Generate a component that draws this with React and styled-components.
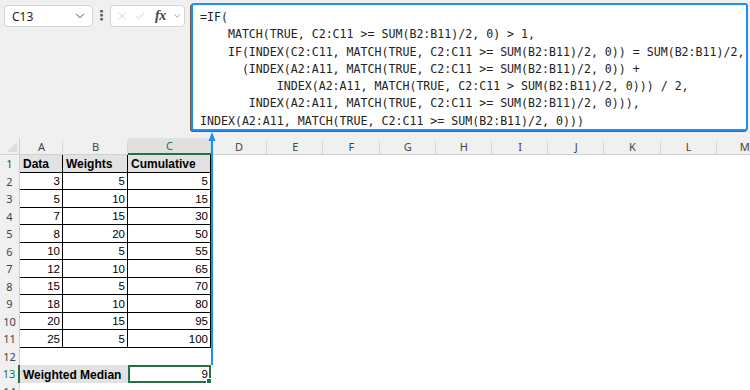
import React from "react";
import styled, { createGlobalStyle } from "styled-components";
import { ChevronDown, X, Check } from "lucide-react";

const Global = createGlobalStyle`
  html, body { margin: 0; padding: 0; background: #fff; }
  body { width: 750px; height: 390px; overflow: hidden; font-family: "Liberation Sans", Arial, sans-serif; }
`;

const Page = styled.div`
  position: relative;
  width: 750px;
  height: 390px;
  overflow: hidden;
  background: #fff;
`;

const TopBar = styled.div`
  display: flex;
  align-items: flex-start;
  height: 138px;
  box-sizing: border-box;
  padding: 3px 2px 0 4px;
  background: #f0f0f0;
`;

const NameBox = styled.div`
  margin-top: 2px;
  width: 89px;
  height: 22px;
  box-sizing: border-box;
  display: flex;
  align-items: center;
  justify-content: space-between;
  padding: 0 5px 0 7px;
  background: #fff;
  border: 1px solid #d4d4d4;
  border-radius: 4px;
  font-family: "Noto Sans", "Open Sans", sans-serif;
  font-size: 12px;
  color: #1f1f1f;
`;

const Dots = styled.div`
  width: 17px;
  margin-top: 4px;
  text-align: center;
  font-family: "DejaVu Sans", sans-serif;
  font-size: 14px;
  font-weight: bold;
  color: #555;
`;

const FxBox = styled.div`
  margin-top: 2px;
  width: 75px;
  height: 22px;
  box-sizing: border-box;
  display: flex;
  align-items: center;
  gap: 6px;
  padding: 0 2px 0 5px;
  background: #fff;
  border: 1px solid #d4d4d4;
  border-radius: 4px;
  color: #bdbdbd;
`;

const Fx = styled.span`
  margin-left: 3px;
  font-family: "Liberation Serif", "DejaVu Serif", serif;
  font-style: italic;
  font-weight: bold;
  font-size: 14px;
  color: #444;
  letter-spacing: -0.5px;
`;

const FormulaBox = styled.div`
  margin-left: 6px;
  width: 557px;
  height: 128px;
  box-sizing: border-box;
  padding: 4px 0 0 7px;
  background: #fff;
  border: 2px solid #1e8ff6;
  border-radius: 3px;
  box-shadow: -1px 1px 0 #6b5a4a;
  font-family: "DejaVu Sans Mono", "Liberation Mono", monospace;
  font-size: 11.6px;
  line-height: 17.3px;
  color: #222;
  white-space: pre;
  overflow: hidden;
`;

const Sheet = styled.div`
  display: grid;
  grid-template-columns: 20px 43px 65px 83px repeat(10, 56.2px);
  grid-template-rows: 17px repeat(14, 17.5px);
`;

const Corner = styled.div`
  position: relative;
  background: #f0f0f0;
  border-bottom: 1px solid #d0d0d0;
  border-right: 1px solid #d0d0d0;
  &::after {
    content: "";
    position: absolute;
    right: 2px;
    bottom: 2px;
    border-left: 10px solid transparent;
    border-bottom: 10px solid #dcdcdc;
  }
`;

const ColHead = styled.div`
  position: relative;
  display: flex;
  align-items: center;
  justify-content: center;
  box-sizing: border-box;
  background: ${(p) => (p.$active ? "#e0e0e0" : "#f0f0f0")};
  border-bottom: ${(p) => (p.$active ? "2px solid #217346" : "1px solid #d0d0d0")};
  font-family: "Noto Sans", "Open Sans", sans-serif;
  font-size: 11px;
  color: ${(p) => (p.$active ? "#217346" : "#444")};
  &::after {
    content: "";
    position: absolute;
    right: 0;
    top: 3px;
    bottom: 0;
    width: 1px;
    background: #d6d6d6;
  }
`;

const RowHead = styled.div`
  display: flex;
  align-items: center;
  justify-content: center;
  box-sizing: border-box;
  background: #f0f0f0;
  border-right: ${(p) => (p.$active ? "2px solid #217346" : "1px solid #d0d0d0")};
  font-family: "Noto Sans", "Open Sans", sans-serif;
  font-size: 11px;
  color: ${(p) => (p.$active ? "#217346" : "#444")};
`;

const Cell = styled.div`
  position: relative;
  display: flex;
  align-items: flex-end;
  justify-content: ${(p) => (p.$right ? "flex-end" : "flex-start")};
  box-sizing: border-box;
  padding: 0 2px 1px 3px;
  grid-column: ${(p) => p.$span || "auto"};
  background: ${(p) => (p.$fill ? "#e2e2e2" : "#fff")};
  border-right: ${(p) => (p.$boxed ? "1px solid #000" : "none")};
  border-bottom: ${(p) => (p.$boxed ? "1px solid #000" : "none")};
  font-size: ${(p) => (p.$bold ? "12px" : "11.5px")};
  font-weight: ${(p) => (p.$bold ? "bold" : "normal")};
  line-height: 14px;
  color: #000;
  white-space: nowrap;
`;

const Selected = styled(Cell)`
  border: 2px solid #217346;
  padding: 0 1px 0 3px;
`;

const Handle = styled.span`
  position: absolute;
  right: -4px;
  bottom: -4px;
  width: 5px;
  height: 5px;
  background: #217346;
  border: 1px solid #fff;
`;

const Arrow = styled.svg`
  position: absolute;
  left: 205px;
  top: 131px;
  overflow: visible;
`;

const formula = [
  "=IF(",
  "    MATCH(TRUE, C2:C11 >= SUM(B2:B11)/2, 0) > 1,",
  "    IF(INDEX(C2:C11, MATCH(TRUE, C2:C11 >= SUM(B2:B11)/2, 0)) = SUM(B2:B11)/2,",
  "      (INDEX(A2:A11, MATCH(TRUE, C2:C11 >= SUM(B2:B11)/2, 0)) +",
  "           INDEX(A2:A11, MATCH(TRUE, C2:C11 > SUM(B2:B11)/2, 0))) / 2,",
  "       INDEX(A2:A11, MATCH(TRUE, C2:C11 >= SUM(B2:B11)/2, 0))),",
  "INDEX(A2:A11, MATCH(TRUE, C2:C11 >= SUM(B2:B11)/2, 0)))",
];

const cols = ["A", "B", "C", "D", "E", "F", "G", "H", "I", "J", "K", "L", "M"];

const rows = [
  [3, 5, 5],
  [5, 10, 15],
  [7, 15, 30],
  [8, 20, 50],
  [10, 5, 55],
  [12, 10, 65],
  [15, 5, 70],
  [18, 10, 80],
  [20, 15, 95],
  [25, 5, 100],
];

export default function App() {
  return (
    <Page>
      <Global />
      <TopBar>
        <NameBox>
          C13
          <ChevronDown size={14} strokeWidth={1.6} color="#444" />
        </NameBox>
        <Dots>⋮</Dots>
        <FxBox>
          <X size={14} strokeWidth={1.3} />
          <Check size={14} strokeWidth={1.3} />
          <Fx>fx</Fx>
          <ChevronDown size={12} strokeWidth={1.5} color="#777" />
        </FxBox>
        <FormulaBox>{formula.join("\n")}</FormulaBox>
      </TopBar>
      <Sheet>
        <Corner />
        {cols.map((c) => (
          <ColHead key={c} $active={c === "C"}>
            {c}
          </ColHead>
        ))}

        <RowHead>1</RowHead>
        <Cell $boxed $fill $bold>Data</Cell>
        <Cell $boxed $fill $bold>Weights</Cell>
        <Cell $boxed $fill $bold>Cumulative</Cell>
        <Cell $span="5 / -1" />

        {rows.map((r, i) => (
          <React.Fragment key={i}>
            <RowHead>{i + 2}</RowHead>
            {r.map((v, j) => (
              <Cell key={j} $boxed $right>
                {v}
              </Cell>
            ))}
            <Cell $span="5 / -1" />
          </React.Fragment>
        ))}

        <RowHead>12</RowHead>
        <Cell $span="2 / -1" />

        <RowHead $active>13</RowHead>
        <Cell $span="2 / 4" $fill $bold>Weighted Median</Cell>
        <Selected $right>
          9
          <Handle />
        </Selected>
        <Cell $span="5 / -1" />

        <RowHead>14</RowHead>
        <Cell $span="2 / -1" />
      </Sheet>
      <Arrow width="14" height="236" viewBox="0 0 14 236">
        <line x1="7" y1="6" x2="7" y2="234" stroke="#1e8ff6" strokeWidth="2" />
        <polygon points="7,1 3.5,10 10.5,10" fill="#1e8ff6" />
      </Arrow>
    </Page>
  );
}
